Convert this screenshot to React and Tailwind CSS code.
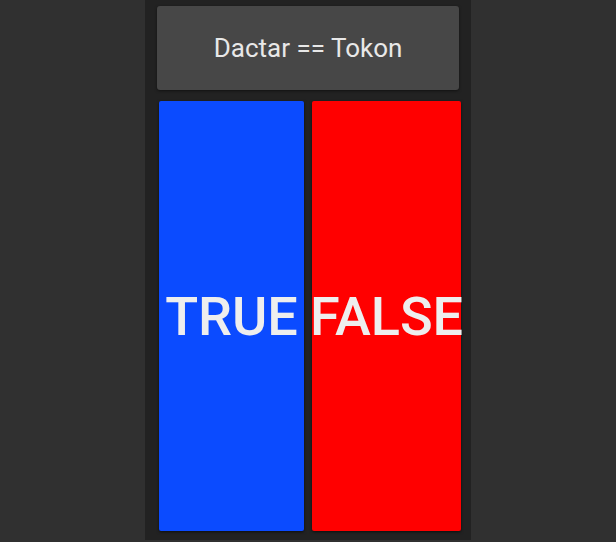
export default function App() {
  return (
    <div className="flex h-[542px] w-full justify-center bg-[#303030]" style={{ fontFamily: "Roboto, 'Liberation Sans', sans-serif" }}>
      <div className="h-[540px] w-[326px] bg-[#222222] px-3 pt-[6px]">
        <div className="flex h-[84px] items-center justify-center rounded-[3px] bg-[#474747] text-[26px] text-[#e8e8e8] shadow-[0_1px_3px_rgba(0,0,0,0.5)]">
          Dactar == Tokon
        </div>

        <div className="ml-[2px] mt-[11px] flex h-[430px] w-[302px] gap-[8px]">
          <button className="flex w-[145px] items-center justify-center overflow-visible whitespace-nowrap rounded-[2px] bg-[#0b4bff] text-[54px] font-medium text-[#eeeeee] shadow-[0_1px_3px_rgba(0,0,0,0.6)]">
            TRUE
          </button>
          <button className="flex w-[149px] items-center justify-center overflow-visible whitespace-nowrap rounded-[2px] bg-[#ff0000] text-[54px] font-medium text-[#eeeeee] shadow-[0_1px_3px_rgba(0,0,0,0.6)]">
            FALSE
          </button>
        </div>
      </div>
    </div>
  );
}
